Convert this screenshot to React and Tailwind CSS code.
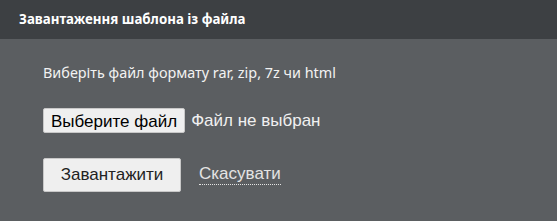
import React from 'react';

export default function App() {
  return (
    <div className="w-[557px] h-[221px] bg-[#5b5e61] flex flex-col">
      {/* Header */}
      <div className="h-[39px] bg-[#3d4043] flex items-center pl-[19px]">
        <h2 className="text-white text-[13.3px] font-bold font-['Noto_Sans',sans-serif]">
          Завантаження шаблона із файла
        </h2>
      </div>

      <div className="pl-[43px] pt-[24px]">
        <p className="text-[#f2f2f2] text-[14.4px] leading-[20px] font-['Noto_Sans',sans-serif]">
          Виберіть файл формату rar, zip, 7z чи html
        </p>

        <div className="mt-[25px] flex items-center font-['Liberation_Sans',sans-serif] text-[17px]">
          <button className="h-[25px] px-[7px] bg-[#efefef] border border-[#c8c8c8] rounded-[2px] text-black">
            Выберите файл
          </button>
          <span className="ml-[6px] text-[#f0f0f0]">Файл не выбран</span>
        </div>

        <div className="mt-[24px] flex items-center font-['Liberation_Sans',sans-serif] text-[17px]">
          <button className="w-[138px] h-[34px] bg-[#efefef] border border-[#c8c8c8] rounded-[2px] text-[#222]">
            Завантажити
          </button>
          <a className="ml-[18px] text-[#e4e4e4] border-b border-dotted border-[#e4e4e4] leading-[19px] pb-[1px]">
            Скасувати
          </a>
        </div>
      </div>
    </div>
  );
}
